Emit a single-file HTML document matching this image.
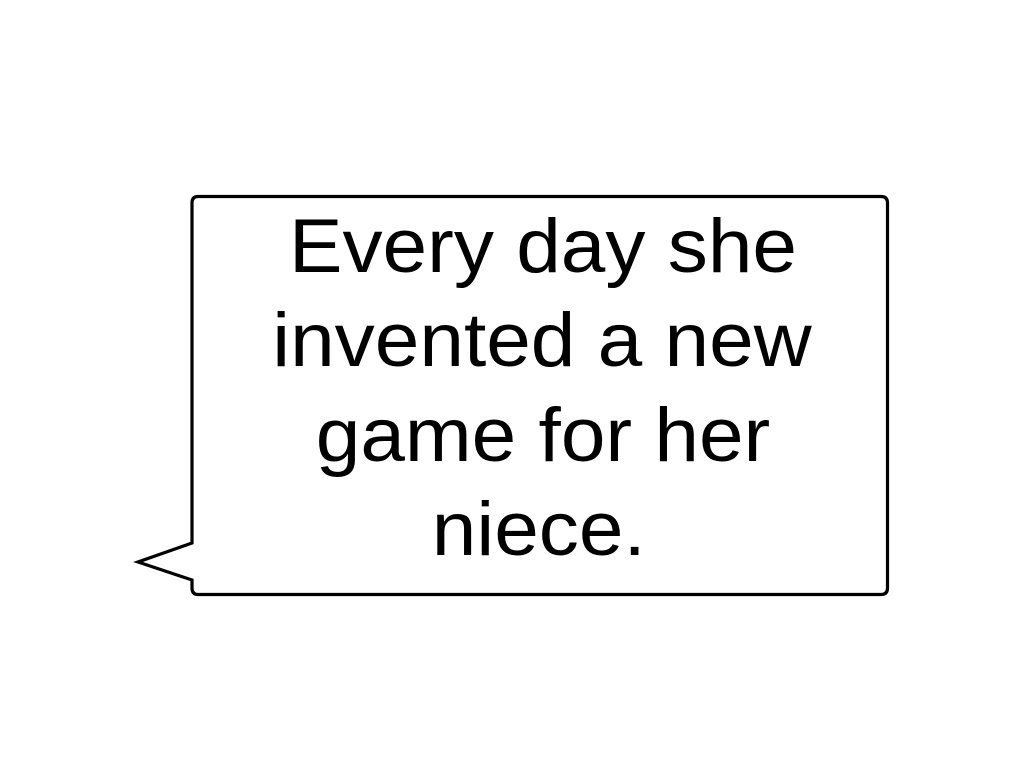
<!DOCTYPE html>
<html><head><style>html,body{margin:0;padding:0;background:#fff;width:1024px;height:768px;overflow:hidden}</style></head>
<body>
<svg width="1024" height="768" xmlns="http://www.w3.org/2000/svg">
<path d="M198,196.5 H881 Q887.5,196.5 887.5,203 V588 Q887.5,594.5 881,594.5 H198 Q192,594.5 192,588 V580 L138,562 L192,543 V203 Q192,196.5 198,196.5 Z" fill="#fff" stroke="#000" stroke-width="3.2" stroke-linejoin="miter"/>
<g font-family="Liberation Sans, Arial, sans-serif" font-size="76" text-anchor="middle" fill="#000" transform="translate(543,0) scale(1.055,1) translate(-543,0)">
<text x="543" y="272">Every day she</text>
<text x="542" y="366">invented a new</text>
<text x="543" y="461">game for her</text>
<text x="539" y="555">niece.</text>
</g>
</svg>
</body></html>
